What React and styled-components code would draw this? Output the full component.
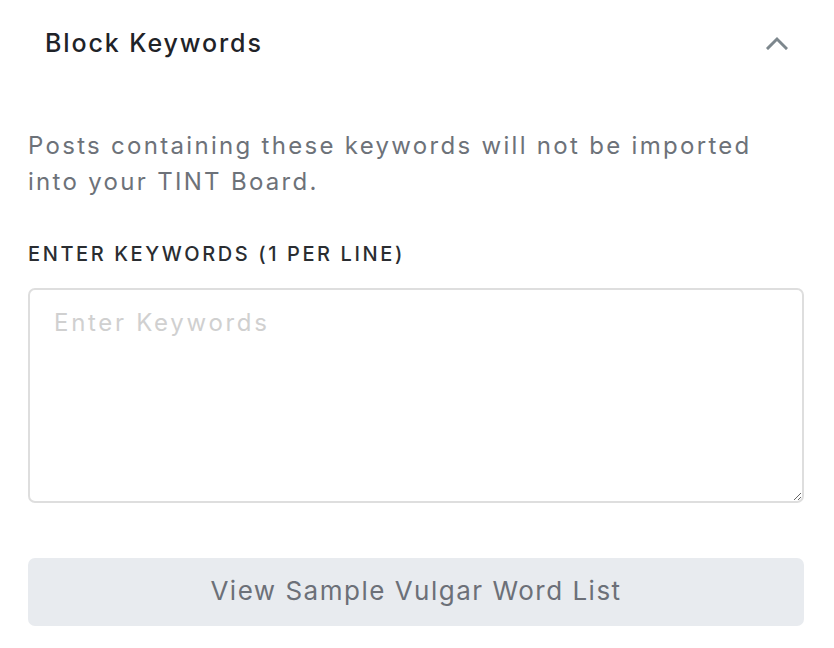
import React from 'react';
import styled, { createGlobalStyle } from 'styled-components';

const GlobalStyle = createGlobalStyle`
  html, body {
    margin: 0;
    padding: 0;
    background: #ffffff;
  }
  body {
    font-family: Inter, "Noto Sans", sans-serif;
    -webkit-font-smoothing: antialiased;
  }
`;

const Panel = styled.section`
  width: 834px;
  height: 648px;
  box-sizing: border-box;
  padding: 0 30px 0 28px;
  display: flex;
  flex-direction: column;
`;

const Header = styled.header`
  display: flex;
  align-items: center;
  justify-content: space-between;
  height: 85px;
  padding: 0 16px 0 17px;
`;

const Title = styled.h2`
  margin: 0;
  font-size: 25px;
  font-weight: 500;
  color: #1f2328;
  letter-spacing: 1.9px;
`;

const Toggle = styled.button`
  border: 0;
  background: none;
  padding: 0;
  width: 22px;
  height: 22px;
  display: flex;
  align-items: center;
  justify-content: center;
  cursor: pointer;
`;

const Description = styled.p`
  margin: 43px 0 0;
  font-size: 24px;
  line-height: 36px;
  color: #6d7279;
  letter-spacing: 2.3px;
`;

const Label = styled.label`
  display: block;
  margin-top: 42px;
  font-size: 20px;
  font-weight: 500;
  color: #2a2d31;
  letter-spacing: 2.6px;
`;

const KeywordsInput = styled.textarea`
  display: block;
  box-sizing: border-box;
  width: 100%;
  height: 215px;
  margin-top: 22px;
  padding: 18px 24px;
  border: 2px solid #dedede;
  border-radius: 7px;
  font-family: Inter, "Noto Sans", sans-serif;
  font-size: 24px;
  letter-spacing: 2.7px;
  color: #2a2d31;
  resize: vertical;
  outline: none;

  &::placeholder {
    color: #d0d0d0;
  }
`;

const SampleButton = styled.button`
  margin-top: 55px;
  width: 100%;
  height: 68px;
  padding: 0 0 3px;
  border: 0;
  border-radius: 7px;
  background: #e8ebef;
  color: #6c7078;
  font-family: Inter, "Noto Sans", sans-serif;
  font-size: 26px;
  letter-spacing: 1.5px;
  cursor: pointer;
`;

const ChevronUp = () => (
  <svg width="22" height="14" viewBox="0 0 22 14" fill="none">
    <path
      d="M2 12 L11 3 L20 12"
      stroke="#7d878d"
      strokeWidth="3"
      strokeLinecap="square"
    />
  </svg>
);

export default function App() {
  return (
    <>
      <GlobalStyle />
      <Panel>
        <Header>
          <Title>Block Keywords</Title>
          <Toggle aria-label="Collapse">
            <ChevronUp />
          </Toggle>
        </Header>
        <Description>
          Posts containing these keywords will not be imported into your TINT
          Board.
        </Description>
        <Label htmlFor="keywords">ENTER KEYWORDS (1 PER LINE)</Label>
        <KeywordsInput id="keywords" placeholder="Enter Keywords" />
        <SampleButton>View Sample Vulgar Word List</SampleButton>
      </Panel>
    </>
  );
}
